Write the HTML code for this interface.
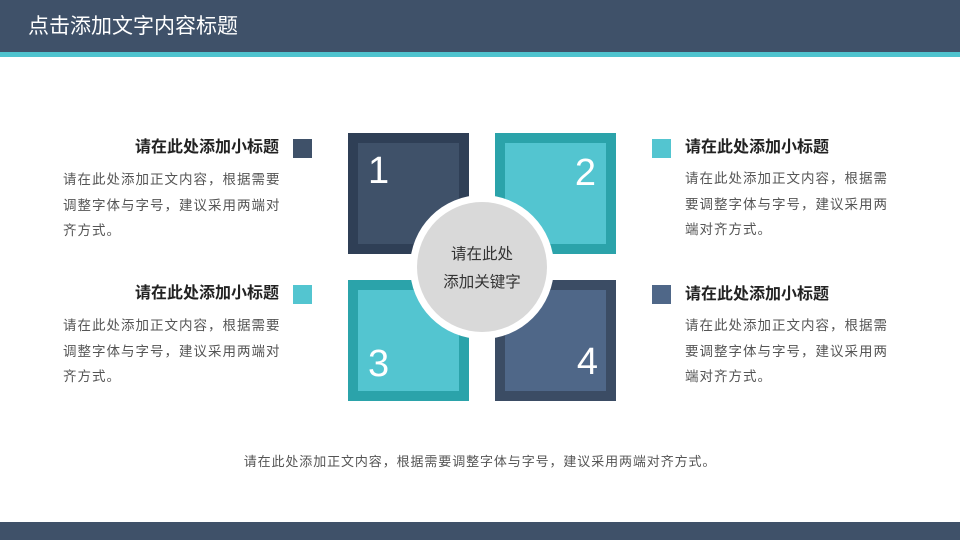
<!DOCTYPE html>
<html><head><meta charset="utf-8"><style>
*{margin:0;padding:0;box-sizing:border-box}
body{width:960px;height:540px;position:relative;background:#fff;font-family:"Liberation Sans","Noto Sans CJK SC",sans-serif;overflow:hidden}
.a{position:absolute}
.hd{left:0;top:0;width:960px;height:52px;background:#3f5169}
.st{left:0;top:52px;width:960px;height:5px;background:#4fc3ce}
.ft{left:0;top:522px;width:960px;height:18px;background:#3f5169}
.ttl{left:28px;top:14px;color:#fff;font-size:21px;line-height:26px}
.sq{width:121px;height:121px}
.in{position:absolute;left:10px;top:10px;width:101px;height:101px}
.num{position:absolute;color:#fff;font-size:38px;line-height:40px}
.h{font-size:16px;font-weight:bold;color:#222;line-height:20px;white-space:nowrap}
.p{font-size:13.5px;color:#555;line-height:25.5px;white-space:nowrap;letter-spacing:1px}
.ic{width:19px;height:19px}
</style></head><body>
<div class="a hd"></div><div class="a st"></div><div class="a ft"></div>
<div class="a ttl">点击添加文字内容标题</div>

<div class="a sq" style="left:348px;top:133px;background:#2f3f56"><div class="in" style="background:#3f5169"></div><div class="num" style="left:20px;top:18px">1</div></div>
<div class="a sq" style="left:495px;top:133px;background:#2ba3aa"><div class="in" style="background:#53c5d0"></div><div class="num" style="right:20px;top:20px">2</div></div>
<div class="a sq" style="left:348px;top:280px;background:#2ba3aa"><div class="in" style="background:#53c5d0"></div><div class="num" style="left:20px;top:64px">3</div></div>
<div class="a sq" style="left:495px;top:280px;background:#3b4c64"><div class="in" style="background:#4f6788"></div><div class="num" style="right:18px;top:62px">4</div></div>
<div class="a" style="left:410px;top:195px;width:144px;height:144px;border-radius:50%;background:#fff"></div>
<div class="a" style="left:417px;top:202px;width:130px;height:130px;border-radius:50%;background:#d9d9d9;color:#333;font-size:15.5px;line-height:28px;text-align:center;padding-top:39px">请在此处<br>添加关键字</div>

<div class="a ic" style="left:293px;top:139px;background:#3f5169"></div>
<div class="a h" style="right:681px;top:138px">请在此处添加小标题</div>
<div class="a p" style="left:63px;top:167px">请在此处添加正文内容，根据需要<br>调整字体与字号，建议采用两端对<br>齐方式。</div>

<div class="a ic" style="left:293px;top:285px;background:#53c5d0"></div>
<div class="a h" style="right:681px;top:284px">请在此处添加小标题</div>
<div class="a p" style="left:63px;top:313px">请在此处添加正文内容，根据需要<br>调整字体与字号，建议采用两端对<br>齐方式。</div>

<div class="a ic" style="left:652px;top:139px;background:#53c5d0"></div>
<div class="a h" style="left:685px;top:138px">请在此处添加小标题</div>
<div class="a p" style="left:685px;top:166px">请在此处添加正文内容，根据需<br>要调整字体与字号，建议采用两<br>端对齐方式。</div>

<div class="a ic" style="left:652px;top:285px;background:#4f6788"></div>
<div class="a h" style="left:685px;top:285px">请在此处添加小标题</div>
<div class="a p" style="left:685px;top:313px">请在此处添加正文内容，根据需<br>要调整字体与字号，建议采用两<br>端对齐方式。</div>

<div class="a" style="left:0;width:960px;top:451px;text-align:center;font-size:13px;color:#555;letter-spacing:0.9px">请在此处添加正文内容，根据需要调整字体与字号，建议采用两端对齐方式。</div>
</body></html>
